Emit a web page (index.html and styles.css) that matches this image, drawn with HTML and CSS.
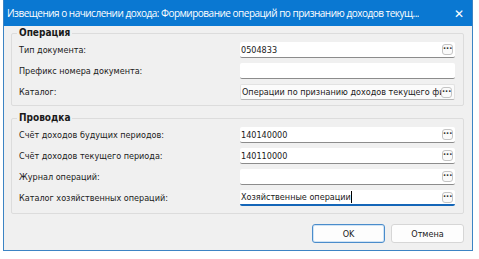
FILE: index.html
```html
<!DOCTYPE html>
<html lang="ru">
<head>
  <meta charset="UTF-8" />
  <title>Извещения о начислении дохода</title>
  <link rel="stylesheet" href="styles.css">
</head>
<body>
  <div class="dialog">
    <div class="dialog__title">
      <span class="dialog__title--text">Извещения о начислении дохода: Формирование операций по признанию доходов текущ...</span>
      <span class="dialog__title--close">✕</span>
    </div>

    <div class="dialog__body">
      <fieldset class="group">
        <legend class="group__legend">Операция</legend>
        <div class="row">
          <label>Тип документа:</label>
          <div class="field"><span class="field__text">0504833</span><span class="dots">···</span></div>
        </div>
        <div class="row">
          <label>Префикс номера документа:</label>
          <div class="field"></div>
        </div>
        <div class="row">
          <label>Каталог:</label>
          <div class="field field--ro"><span class="field__text">Операции по признанию доходов текущего фи</span><span class="dots">···</span></div>
        </div>
      </fieldset>

      <fieldset class="group group--last">
        <legend class="group__legend">Проводка</legend>
        <div class="row">
          <label>Счёт доходов будущих периодов:</label>
          <div class="field"><span class="field__text">140140000</span><span class="dots">···</span></div>
        </div>
        <div class="row">
          <label>Счёт доходов текущего периода:</label>
          <div class="field"><span class="field__text">140110000</span><span class="dots">···</span></div>
        </div>
        <div class="row">
          <label>Журнал операций:</label>
          <div class="field"><span class="field__text"></span><span class="dots">···</span></div>
        </div>
        <div class="row">
          <label>Каталог хозяйственных операций:</label>
          <div class="field field--focus"><span class="field__text">Хозяйственные операции<span class="caret"></span></span><span class="dots">···</span></div>
        </div>
      </fieldset>

      <div class="dialog__footer">
        <button class="btn btn--default">OK</button>
        <button class="btn">Отмена</button>
      </div>
    </div>
  </div>
</body>
</html>
```

FILE: styles.css
```css
body {
  margin: 0;
  background-color: #fff;
  font-family: "DejaVu Sans Condensed", "DejaVu Sans", sans-serif;
  font-size: 9px;
  color: #1a1a1a;
}

.dialog {
  margin-left: 3px;
  width: 470px;
  height: 251px;
  box-sizing: border-box;
  border: 1px solid #3c84c4;
  border-top: none;
  background-color: #f0f0f0;
  display: flex;
  flex-direction: column;
  overflow: hidden;
}

.dialog__title {
  height: 26px;
  flex: none;
  background-color: #0a78d2;
  color: #fff;
  display: flex;
  align-items: center;
  justify-content: space-between;
  padding: 0 10px 0 4px;
  margin: 0 -1px;
  font-family: "Open Sans", sans-serif;
  font-size: 10px;
  letter-spacing: -0.5px;
  white-space: nowrap;
}

.dialog__title--text {
  min-width: 0;
  overflow: hidden;
}

.dialog__title--close {
  flex: none;
  margin-left: 20px;
  font-size: 12px;
  font-weight: 300;
}

.dialog__body {
  padding: 1px 8px 0 7px;
  display: flex;
  flex-direction: column;
}

.group {
  margin: 0 0 6px 0;
  padding: 3px 8px 5px 7px;
  border: 1px solid #dcdcdc;
  border-radius: 2px;
  display: flex;
  flex-direction: column;
  gap: 5px;
  min-width: 0;
}

.group--last {
  margin-bottom: 0;
  padding-bottom: 7px;
}

.group__legend {
  font-weight: 700;
  font-size: 10px;
  line-height: 12px;
  padding: 0 2px;
  margin-left: -2px;
}

.row {
  display: flex;
  align-items: center;
  height: 16px;
}

label {
  width: 221px;
  flex: none;
}

.field {
  flex: 1;
  min-width: 0;
  height: 16px;
  box-sizing: border-box;
  background-color: #fff;
  border-bottom: 1px solid #8c8c8c;
  border-radius: 2px;
  display: flex;
  align-items: center;
  padding-left: 1px;
}

.field--ro {
  background-color: #fbfbfb;
  border: 1px solid #e2e2e2;
  border-bottom-color: #b8b8b8;
}

.field--focus {
  border-bottom: 2px solid #1466b8;
}

.field__text {
  flex: 1;
  min-width: 0;
  white-space: nowrap;
  overflow: hidden;
}

.caret {
  display: inline-block;
  width: 1px;
  height: 12px;
  background-color: #000;
  vertical-align: middle;
}

.dots {
  flex: none;
  width: 11px;
  height: 11px;
  margin-right: 2px;
  box-sizing: border-box;
  border: 1px solid #c4c4c4;
  border-radius: 3px;
  background-color: #fafafa;
  font-size: 9px;
  font-weight: 700;
  line-height: 7px;
  text-align: center;
  color: #333;
}

.dialog__footer {
  display: flex;
  justify-content: flex-end;
  gap: 6px;
  margin-top: 10px;
}

.btn {
  width: 73px;
  height: 19px;
  font-family: inherit;
  font-size: 9px;
  color: #1a1a1a;
  background-color: #fdfdfd;
  border: 1px solid #d6d6d6;
  border-radius: 3px;
  padding: 0;
}

.btn--default {
  border: 1px solid #4a8ccb;
  box-shadow: inset 0 0 0 1px #cfe3f5;
}
```
